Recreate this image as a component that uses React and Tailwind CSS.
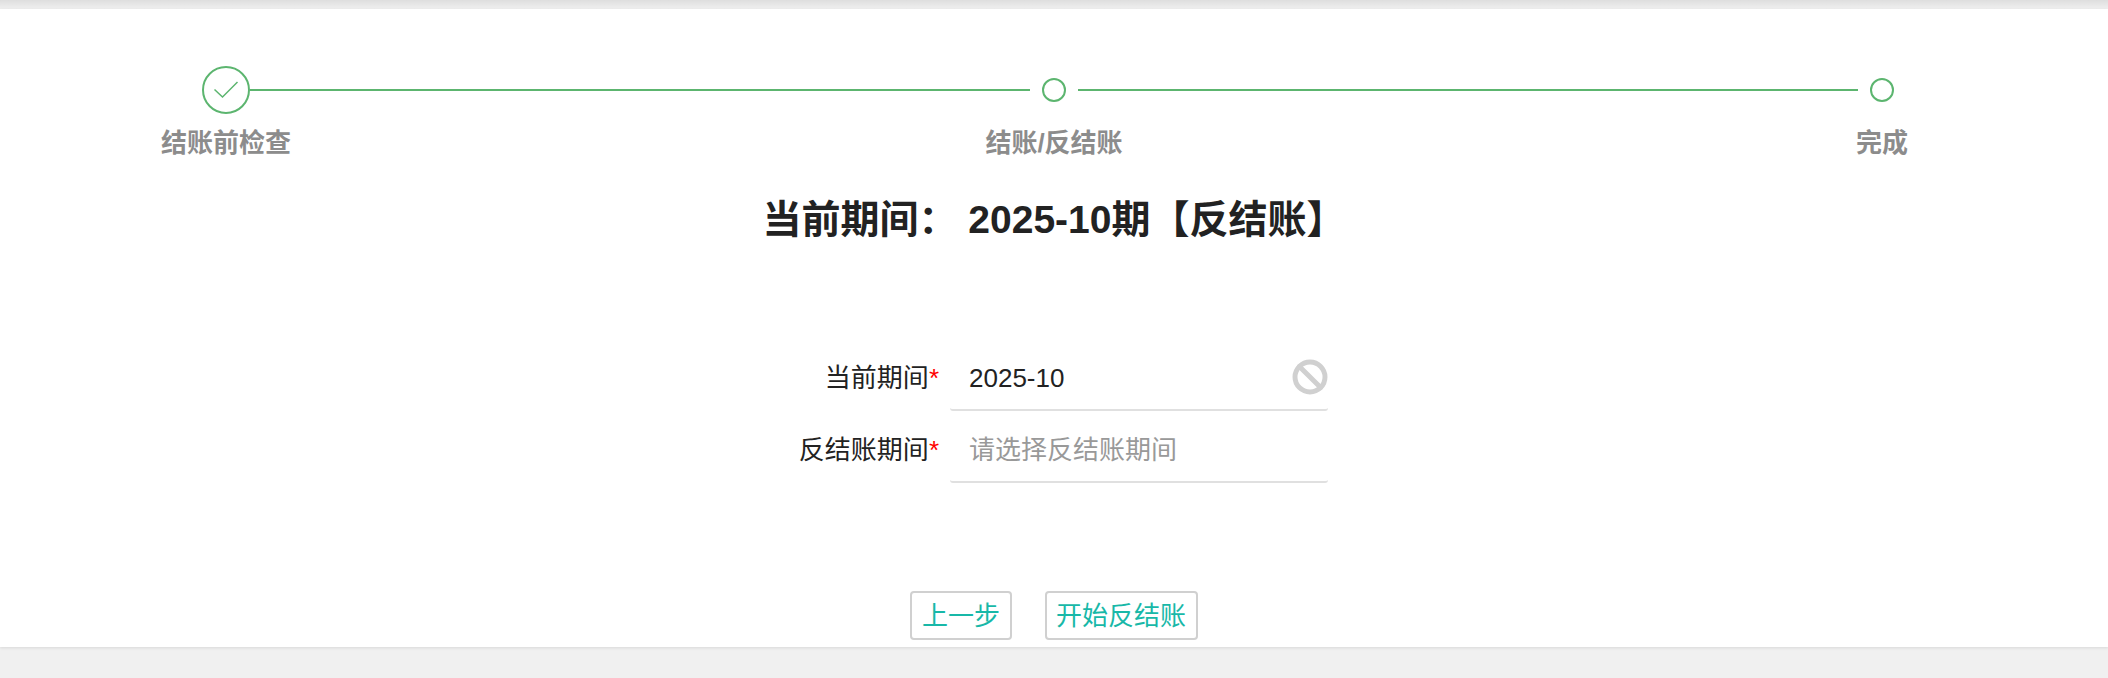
import React from "react";
import { Ban } from "lucide-react";

const FONT = "font-['Liberation_Sans','Noto_Sans_CJK_SC',sans-serif]";

const FIELDS = [
  { label: "当前期间", value: "2025-10", disabled: true },
  { label: "反结账期间", placeholder: "请选择反结账期间" },
];

const Steps = () => (
  <div className="grid grid-cols-[48px_792px_24px_804px_24px] pl-[202px] pt-[57px]">
    <div className="w-12 h-12 rounded-full border-2 border-[#5cb56f] flex items-center justify-center">
      <svg width="26" height="20" viewBox="0 0 26 20" fill="none">
        <path d="M1.5 9.5 9.5 17 24.5 2" stroke="#5cb56f" strokeWidth="1.5" />
      </svg>
    </div>
    <div className="h-0.5 self-center mr-3 bg-[#5cb56f]" />
    <div className="w-6 h-6 self-center rounded-full border-2 border-[#5cb56f]" />
    <div className="h-0.5 self-center mx-3 bg-[#5cb56f]" />
    <div className="w-6 h-6 self-center rounded-full border-2 border-[#5cb56f]" />
    <div className="col-start-1 justify-self-center whitespace-nowrap mt-[11px] text-[26px] leading-[36px] font-bold text-[#8c8c8c]">
      结账前检查
    </div>
    <div className="col-start-3 justify-self-center whitespace-nowrap mt-[11px] text-[26px] leading-[36px] font-bold text-[#8c8c8c]">
      结账/反结账
    </div>
    <div className="col-start-5 justify-self-center whitespace-nowrap mt-[11px] text-[26px] leading-[36px] font-bold text-[#8c8c8c]">
      完成
    </div>
  </div>
);

const Field = ({ label, value, placeholder, disabled }) => (
  <div className="flex h-[72px]">
    <div className="w-[239px] h-[64px] pt-[2px] flex items-center justify-end text-[26px] text-[#222]">
      {label}
      <span className="text-[#f00]">*</span>
    </div>
    <div className="ml-[11px] w-[378px] h-[66px] flex items-center justify-between pl-[19px] border-b-2 border-[#e0e0e0] rounded-b-[3px] text-[26px]">
      {value ? (
        <span className="text-[#222] pt-[2px]">{value}</span>
      ) : (
        <span className="text-[#999] pt-[2px]">{placeholder}</span>
      )}
      {disabled && <Ban size={36} strokeWidth={3.3} className="text-[#d0d0d0]" />}
    </div>
  </div>
);

export default function App() {
  return (
    <div className={`h-[678px] bg-[#f0f0f0] flex flex-col ${FONT}`}>
      <div className="h-[9px] bg-gradient-to-b from-[#dedede] to-[#f0f0f0]" />
      <div className="h-[638px] bg-white shadow-[0_1px_3px_rgba(0,0,0,0.1)]">
        <Steps />
        <h1 className="mt-[31px] text-center text-[39px] leading-[56px] font-bold text-[#222]">
          当前期间： 2025-10期【反结账】
        </h1>
        <div className="mt-[97px] pl-[700px]">
          {FIELDS.map((f) => (
            <Field key={f.label} {...f} />
          ))}
        </div>
        <div className="mt-[102px] flex justify-center gap-[33px]">
          <button className="h-[49px] px-[9.5px] pt-[2px] border-2 border-[#d0d0d0] rounded text-[26px] text-[#18b8a8] bg-white">
            上一步
          </button>
          <button className="h-[49px] px-[9.5px] pt-[2px] border-2 border-[#d0d0d0] rounded text-[26px] text-[#18b8a8] bg-white">
            开始反结账
          </button>
        </div>
      </div>
    </div>
  );
}
